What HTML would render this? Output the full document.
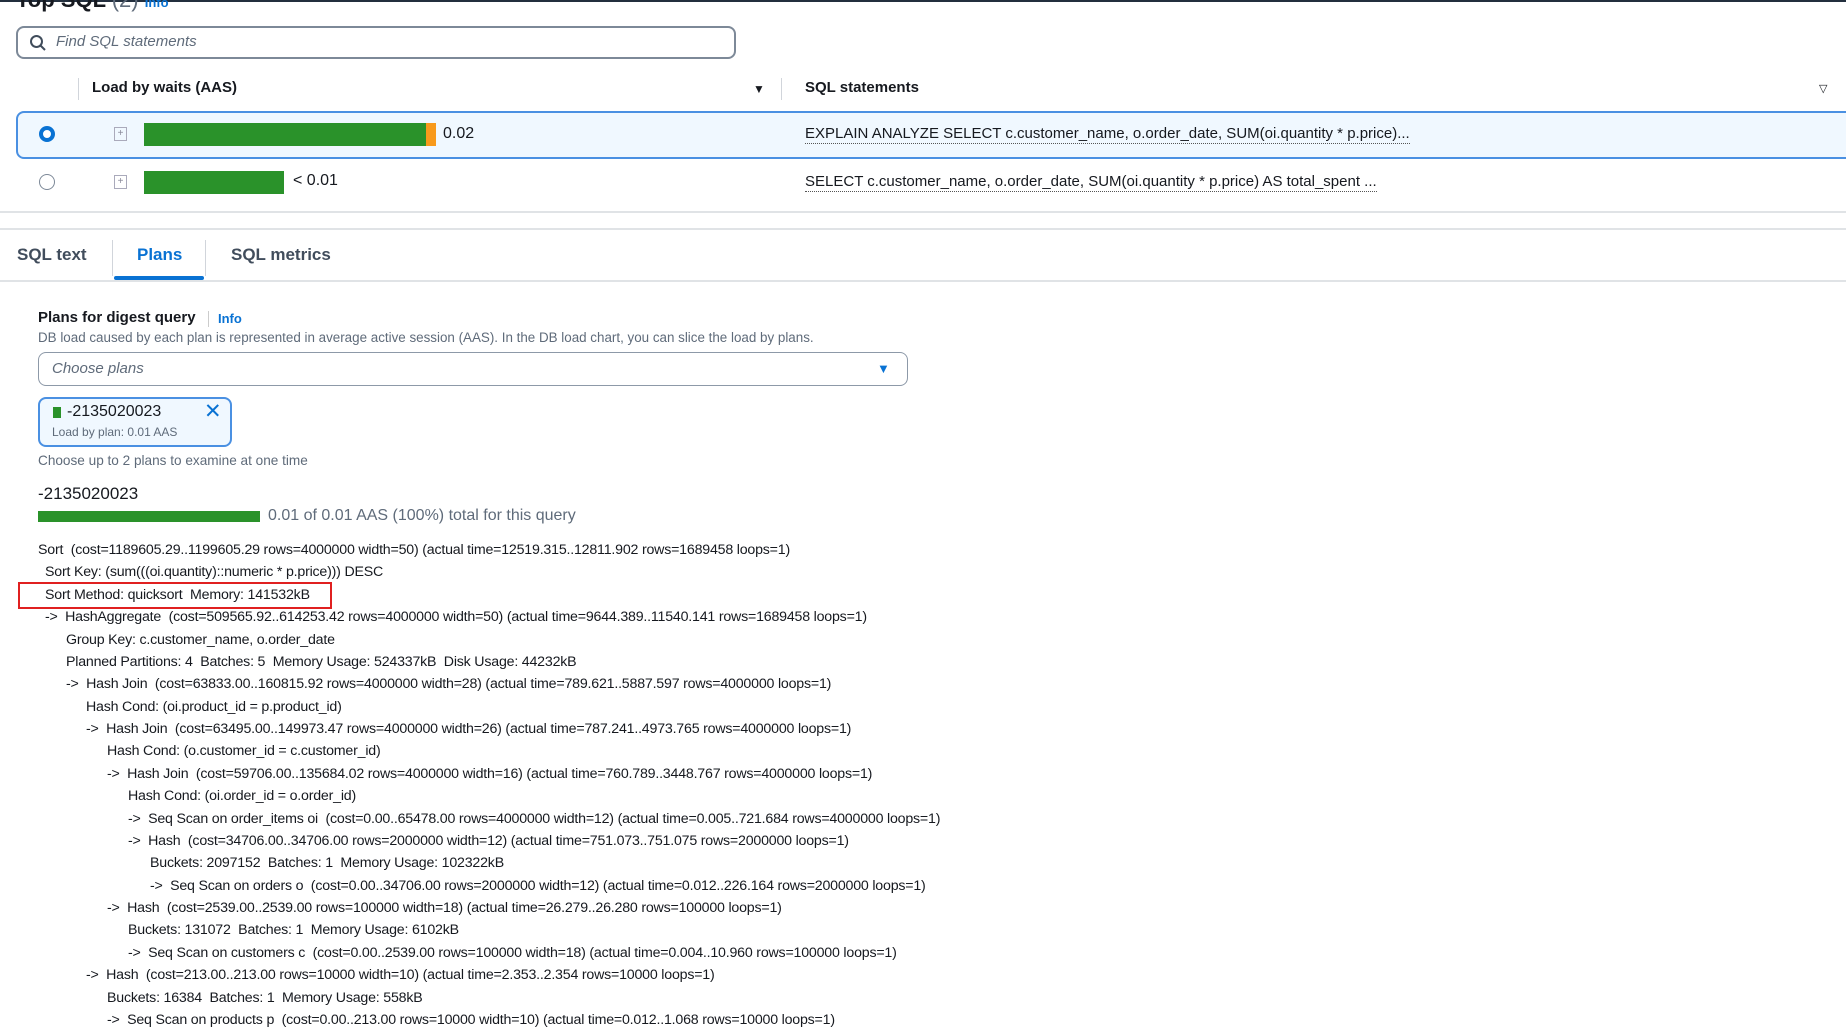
<!DOCTYPE html>
<html><head><meta charset="utf-8">
<style>
*{margin:0;padding:0;box-sizing:border-box}
body{width:1846px;height:1028px;overflow:hidden;background:#fff;font-family:"Liberation Sans",sans-serif;color:#16191f;position:relative}
.a{position:absolute;white-space:nowrap}
.pl{position:absolute;font-size:14.2px;color:#16191f;white-space:nowrap;letter-spacing:-0.2px;margin-top:1px}
.u{border-bottom:1.5px dotted #555;padding-bottom:1px}
</style></head><body>
<div class="a" style="left:0;top:0;width:1846px;height:2px;background:#232f3e"></div>
<div class="a" style="left:16px;top:-13px;font-size:22px;font-weight:bold;color:#16191f">Top SQL <span style="font-weight:normal;color:#5f6b7a">(2)</span> <span style="font-size:13px;color:#0972d3">Info</span></div>
<div class="a" style="left:16px;top:26px;width:720px;height:33px;border:2px solid #7d8998;border-radius:8px"></div>
<svg class="a" style="left:29px;top:34px" width="18" height="18" viewBox="0 0 18 18"><circle cx="7.5" cy="7.5" r="5.5" fill="none" stroke="#414d5c" stroke-width="2"/><line x1="11.5" y1="11.5" x2="16" y2="16" stroke="#414d5c" stroke-width="2"/></svg>
<div class="a" style="left:56px;top:33px;font-size:15px;font-style:italic;color:#5f6b7a">Find SQL statements</div>
<div class="a" style="left:78px;top:78px;width:1px;height:22px;background:#d1d5db"></div>
<div class="a" style="left:92px;top:79px;font-size:15px;font-weight:bold">Load by waits (AAS)</div>
<div class="a" style="left:753px;top:82px;font-size:12px">▼</div>
<div class="a" style="left:781px;top:78px;width:1px;height:22px;background:#d1d5db"></div>
<div class="a" style="left:805px;top:79px;font-size:15px;font-weight:bold">SQL statements</div>
<div class="a" style="left:1819px;top:82px;font-size:11px">▽</div>
<div class="a" style="left:16px;top:111px;width:1840px;height:48px;background:#f0f8ff;border:2px solid #4a90e2;border-radius:8px"></div>
<div class="a" style="left:39px;top:126px;width:16px;height:16px;border-radius:50%;border:4px solid #0972d3;background:#fff"></div>
<div class="a" style="left:114px;top:127px;width:13px;height:14px;border:1px solid #aab;color:#889;font-size:10px;line-height:12px;text-align:center">+</div>
<div class="a" style="left:144px;top:123px;width:282px;height:23px;background:#2a922a"></div>
<div class="a" style="left:426px;top:123px;width:10px;height:23px;background:#f89a1c"></div>
<div class="a" style="left:443px;top:125px;font-size:16px">0.02</div>
<div class="a" style="left:805px;top:125px;font-size:15px"><span class="u">EXPLAIN ANALYZE SELECT c.customer_name, o.order_date, SUM(oi.quantity * p.price)...</span></div>
<div class="a" style="left:39px;top:174px;width:16px;height:16px;border-radius:50%;border:1.5px solid #7d8998"></div>
<div class="a" style="left:114px;top:175px;width:13px;height:14px;border:1px solid #aab;color:#889;font-size:10px;line-height:12px;text-align:center">+</div>
<div class="a" style="left:144px;top:171px;width:140px;height:23px;background:#2a922a"></div>
<div class="a" style="left:293px;top:172px;font-size:16px">&lt; 0.01</div>
<div class="a" style="left:805px;top:173px;font-size:15px"><span class="u">SELECT c.customer_name, o.order_date, SUM(oi.quantity * p.price) AS total_spent ...</span></div>
<div class="a" style="left:-10px;top:150px;width:1870px;height:63px;border:2px solid #e0e3e6;border-top:none;border-radius:0 0 10px 10px"></div>
<div class="a" style="left:-10px;top:228px;width:1870px;height:60px;border:2px solid #e0e3e6;border-bottom:none;border-radius:10px 10px 0 0"></div>
<div class="a" style="left:17px;top:245px;font-size:17px;font-weight:bold;color:#414d5c">SQL text</div>
<div class="a" style="left:112px;top:240px;width:1px;height:36px;background:#d1d5db"></div>
<div class="a" style="left:137px;top:245px;font-size:17px;font-weight:bold;color:#0972d3">Plans</div>
<div class="a" style="left:205px;top:240px;width:1px;height:36px;background:#d1d5db"></div>
<div class="a" style="left:231px;top:245px;font-size:17px;font-weight:bold;color:#414d5c">SQL metrics</div>
<div class="a" style="left:0;top:280px;width:1846px;height:2px;background:#e0e3e6"></div>
<div class="a" style="left:114px;top:276px;width:90px;height:4px;background:#0972d3;border-radius:2px"></div>
<div class="a" style="left:38px;top:309px;font-size:15px;font-weight:bold">Plans for digest query</div>
<div class="a" style="left:208px;top:311px;width:1px;height:16px;background:#ccc"></div>
<div class="a" style="left:218px;top:311px;font-size:13px;font-weight:bold;color:#0972d3">Info</div>
<div class="a" style="left:38px;top:330px;font-size:13.4px;color:#5f6b7a">DB load caused by each plan is represented in average active session (AAS). In the DB load chart, you can slice the load by plans.</div>
<div class="a" style="left:38px;top:352px;width:870px;height:34px;border:1.5px solid #8d99a8;border-radius:8px"></div>
<div class="a" style="left:52px;top:360px;font-size:15px;font-style:italic;color:#5f6b7a">Choose plans</div>
<div class="a" style="left:877px;top:361px;font-size:13px;color:#0972d3">▼</div>
<div class="a" style="left:38px;top:397px;width:194px;height:50px;border:2px solid #4a90e2;border-radius:8px;background:#f0f8ff"></div>
<div class="a" style="left:53px;top:407px;width:8px;height:11px;background:#2a922a"></div>
<div class="a" style="left:67px;top:403px;font-size:16px">-2135020023</div>
<div class="a" style="left:204px;top:399px;font-size:21px;color:#0972d3">✕</div>
<div class="a" style="left:52px;top:425px;font-size:12px;color:#5f6b7a">Load by plan: 0.01 AAS</div>
<div class="a" style="left:38px;top:453px;font-size:13.6px;color:#5f6b7a">Choose up to 2 plans to examine at one time</div>
<div class="a" style="left:38px;top:484px;font-size:17px">-2135020023</div>
<div class="a" style="left:38px;top:511px;width:222px;height:11px;background:#2a922a"></div>
<div class="a" style="left:268px;top:507px;font-size:16px;color:#5f6b7a">0.01 of 0.01 AAS (100%) total for this query</div>
<div class="a" style="left:18px;top:582px;width:314px;height:27px;border:2px solid #e02020"></div>

<div class="pl" style="left:38px;top:541px">Sort&nbsp; (cost=1189605.29..1199605.29 rows=4000000 width=50) (actual time=12519.315..12811.902 rows=1689458 loops=1)</div>
<div class="pl" style="left:45px;top:563px">Sort Key: (sum(((oi.quantity)::numeric * p.price))) DESC</div>
<div class="pl" style="left:45px;top:586px">Sort Method: quicksort&nbsp; Memory: 141532kB</div>
<div class="pl" style="left:45px;top:608px">-&gt;&nbsp; HashAggregate&nbsp; (cost=509565.92..614253.42 rows=4000000 width=50) (actual time=9644.389..11540.141 rows=1689458 loops=1)</div>
<div class="pl" style="left:66px;top:631px">Group Key: c.customer_name, o.order_date</div>
<div class="pl" style="left:66px;top:653px">Planned Partitions: 4&nbsp; Batches: 5&nbsp; Memory Usage: 524337kB&nbsp; Disk Usage: 44232kB</div>
<div class="pl" style="left:66px;top:675px">-&gt;&nbsp; Hash Join&nbsp; (cost=63833.00..160815.92 rows=4000000 width=28) (actual time=789.621..5887.597 rows=4000000 loops=1)</div>
<div class="pl" style="left:86px;top:698px">Hash Cond: (oi.product_id = p.product_id)</div>
<div class="pl" style="left:86px;top:720px">-&gt;&nbsp; Hash Join&nbsp; (cost=63495.00..149973.47 rows=4000000 width=26) (actual time=787.241..4973.765 rows=4000000 loops=1)</div>
<div class="pl" style="left:107px;top:742px">Hash Cond: (o.customer_id = c.customer_id)</div>
<div class="pl" style="left:107px;top:765px">-&gt;&nbsp; Hash Join&nbsp; (cost=59706.00..135684.02 rows=4000000 width=16) (actual time=760.789..3448.767 rows=4000000 loops=1)</div>
<div class="pl" style="left:128px;top:787px">Hash Cond: (oi.order_id = o.order_id)</div>
<div class="pl" style="left:128px;top:810px">-&gt;&nbsp; Seq Scan on order_items oi&nbsp; (cost=0.00..65478.00 rows=4000000 width=12) (actual time=0.005..721.684 rows=4000000 loops=1)</div>
<div class="pl" style="left:128px;top:832px">-&gt;&nbsp; Hash&nbsp; (cost=34706.00..34706.00 rows=2000000 width=12) (actual time=751.073..751.075 rows=2000000 loops=1)</div>
<div class="pl" style="left:150px;top:854px">Buckets: 2097152&nbsp; Batches: 1&nbsp; Memory Usage: 102322kB</div>
<div class="pl" style="left:150px;top:877px">-&gt;&nbsp; Seq Scan on orders o&nbsp; (cost=0.00..34706.00 rows=2000000 width=12) (actual time=0.012..226.164 rows=2000000 loops=1)</div>
<div class="pl" style="left:107px;top:899px">-&gt;&nbsp; Hash&nbsp; (cost=2539.00..2539.00 rows=100000 width=18) (actual time=26.279..26.280 rows=100000 loops=1)</div>
<div class="pl" style="left:128px;top:921px">Buckets: 131072&nbsp; Batches: 1&nbsp; Memory Usage: 6102kB</div>
<div class="pl" style="left:128px;top:944px">-&gt;&nbsp; Seq Scan on customers c&nbsp; (cost=0.00..2539.00 rows=100000 width=18) (actual time=0.004..10.960 rows=100000 loops=1)</div>
<div class="pl" style="left:86px;top:966px">-&gt;&nbsp; Hash&nbsp; (cost=213.00..213.00 rows=10000 width=10) (actual time=2.353..2.354 rows=10000 loops=1)</div>
<div class="pl" style="left:107px;top:989px">Buckets: 16384&nbsp; Batches: 1&nbsp; Memory Usage: 558kB</div>
<div class="pl" style="left:107px;top:1011px">-&gt;&nbsp; Seq Scan on products p&nbsp; (cost=0.00..213.00 rows=10000 width=10) (actual time=0.012..1.068 rows=10000 loops=1)</div>
</body></html>
